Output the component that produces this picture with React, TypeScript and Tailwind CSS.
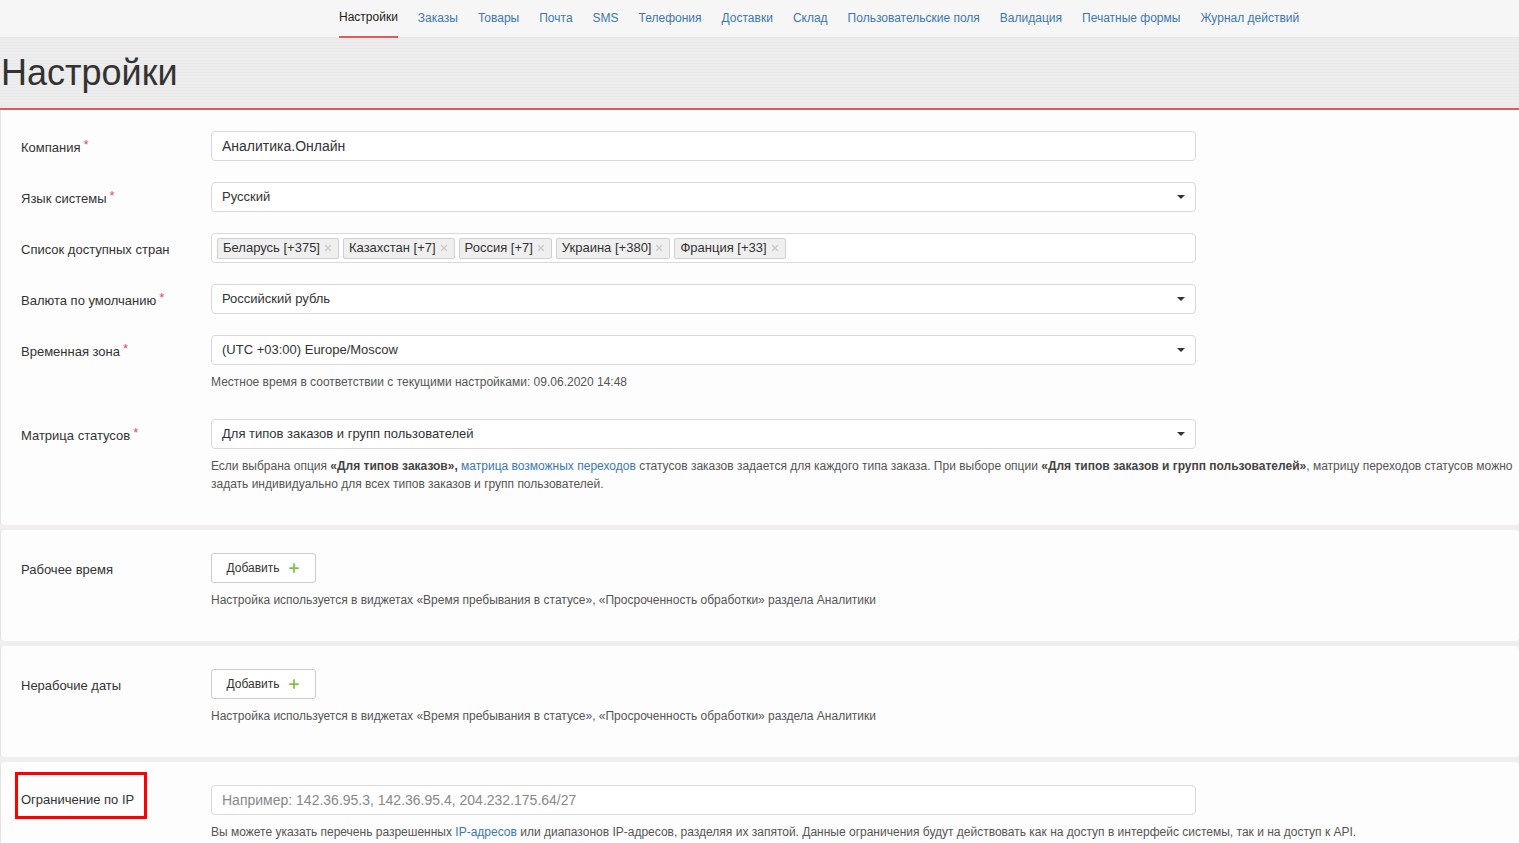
import { Plus, X } from 'lucide-react';

const navItems = [
  'Настройки', 'Заказы', 'Товары', 'Почта', 'SMS', 'Телефония', 'Доставки', 'Склад',
  'Пользовательские поля', 'Валидация', 'Печатные формы', 'Журнал действий',
];

const countries = ['Беларусь [+375]', 'Казахстан [+7]', 'Россия [+7]', 'Украина [+380]', 'Франция [+33]'];

function Label({ text, required }: { text: string; required?: boolean }) {
  return (
    <div className="w-[190px] h-[30px] shrink-0 text-[13px] text-[#333] leading-[33px]">
      {text}
      {required && <span className="text-[#e0505a] ml-[3px] relative -top-[3px]">*</span>}
    </div>
  );
}

function Select({ value }: { value: string }) {
  return (
    <div className="w-[985px] h-[30px] border border-[#d9d9d9] rounded-[4px] bg-white flex items-center justify-between pl-[10px] pr-[10px] text-[13px] text-[#333]">
      <span>{value}</span>
      <span className="w-0 h-0 border-l-[4px] border-r-[4px] border-t-[4px] border-l-transparent border-r-transparent border-t-[#333]" />
    </div>
  );
}

function AddButton() {
  return (
    <button className="h-[30px] w-[105px] border border-[#ccc] rounded-[3px] bg-white flex items-center justify-center gap-[7px] text-[12px] text-[#333]">
      Добавить <Plus size={14} strokeWidth={3} className="text-[#7cc242]" />
    </button>
  );
}

function Help({ children }: { children: React.ReactNode }) {
  return <div className="text-[12px] text-[#555] leading-[18px] mt-[8px]">{children}</div>;
}

export default function App() {
  return (
    <div className="min-h-[843px] bg-[#f1eeef] font-['Liberation_Sans',Arial,sans-serif]">
      <nav className="h-[38px] bg-[#f6f6f6] border-b border-[#e6e6e6] flex pl-[339px] gap-[20px] text-[12px]">
        {navItems.map((n, i) => (
          <a
            key={n}
            className={`h-[38px] flex items-center pb-[2px] ${i === 0 ? 'text-[#222] border-b-2 border-[#e05a5a]' : 'text-[#3c78b0]'}`}
          >
            {n}
          </a>
        ))}
      </nav>
      <header className="h-[72px] bg-[#ececec] bg-[repeating-linear-gradient(0deg,#ededed_0px,#ededed_2px,#e9e9e9_2px,#e9e9e9_3px)] border-b-2 border-[#e05a5a] flex items-center pl-[1px]">
        <h1 className="text-[36px] text-[#333] leading-none">Настройки</h1>
      </header>

      <section className="bg-[#fdfdfd] border-l border-[#e3e3e3] rounded-b-[4px] pt-[21px] pb-[32px] pl-[20px]">
        <div className="flex flex-col gap-[21px]">
          <div className="flex">
            <Label text="Компания" required />
            <div className="w-[985px] h-[30px] border border-[#d9d9d9] rounded-[4px] bg-white flex items-center pl-[10px] text-[14px] text-[#333]">
              Аналитика.Онлайн
            </div>
          </div>
          <div className="flex">
            <Label text="Язык системы" required />
            <Select value="Русский" />
          </div>
          <div className="flex">
            <Label text="Список доступных стран" />
            <div className="w-[985px] h-[30px] border border-[#d9d9d9] rounded-[4px] bg-white flex items-center pl-[5px] gap-[4px]">
              {countries.map(c => (
                <span key={c} className="h-[21px] flex items-center gap-[3px] px-[5px] bg-[#efefef] border border-[#d0d0d0] rounded-[2px] text-[13px] text-[#333]">
                  {c}
                  <X size={10} strokeWidth={3} className="text-[#c8c8c8]" />
                </span>
              ))}
            </div>
          </div>
          <div className="flex">
            <Label text="Валюта по умолчанию" required />
            <Select value="Российский рубль" />
          </div>
          <div className="flex">
            <Label text="Временная зона" required />
            <div>
              <Select value="(UTC +03:00) Europe/Moscow" />
              <Help>Местное время в соответствии с текущими настройками: 09.06.2020 14:48</Help>
            </div>
          </div>
          <div className="flex mt-[7px]">
            <Label text="Матрица статусов" required />
            <div>
              <Select value="Для типов заказов и групп пользователей" />
              <Help>
                <p className="w-[1305px]">
                  Если выбрана опция <b className="text-[#444]">«Для типов заказов»,</b>{' '}
                  <a className="text-[#3c78b0]">матрица возможных переходов</a> статусов заказов задается для каждого типа заказа. При выборе опции{' '}
                  <b className="text-[#444]">«Для типов заказов и групп пользователей»</b>, матрицу переходов статусов можно задать индивидуально для всех типов заказов и групп пользователей.
                </p>
              </Help>
            </div>
          </div>
        </div>
      </section>

      {[0, 1].map(i => (
        <section key={i} className="mt-[5px] bg-[#fdfdfd] border-l border-[#e3e3e3] rounded-[4px] pt-[23px] pb-[32px] pl-[20px] flex">
          <Label text={i === 0 ? 'Рабочее время' : 'Нерабочие даты'} />
          <div>
            <AddButton />
            <Help>Настройка используется в виджетах «Время пребывания в статусе», «Просроченность обработки» раздела Аналитики</Help>
          </div>
        </section>
      ))}

      <section className="mt-[5px] bg-[#fdfdfd] border-l border-[#e3e3e3] rounded-t-[4px] pt-[10px] pb-[6px] pl-[14px] flex">
        <div className="w-[196px] shrink-0">
          <div className="w-[132px] h-[47px] border-[3px] border-[#ff0000] flex items-center pl-[3px] pt-[9px] text-[13px] text-[#333]">
            Ограничение по IP
          </div>
        </div>
        <div className="pt-[13px]">
          <div className="w-[985px] h-[30px] border border-[#d9d9d9] rounded-[4px] bg-white flex items-center pl-[10px] text-[14px] text-[#888]">
            Например: 142.36.95.3, 142.36.95.4, 204.232.175.64/27
          </div>
          <Help>
            Вы можете указать перечень разрешенных <a className="text-[#3c78b0]">IP-адресов</a> или диапазонов IP-адресов, разделяя их запятой. Данные ограничения будут действовать как на доступ в интерфейс системы, так и на доступ к API.
          </Help>
        </div>
      </section>
    </div>
  );
}
